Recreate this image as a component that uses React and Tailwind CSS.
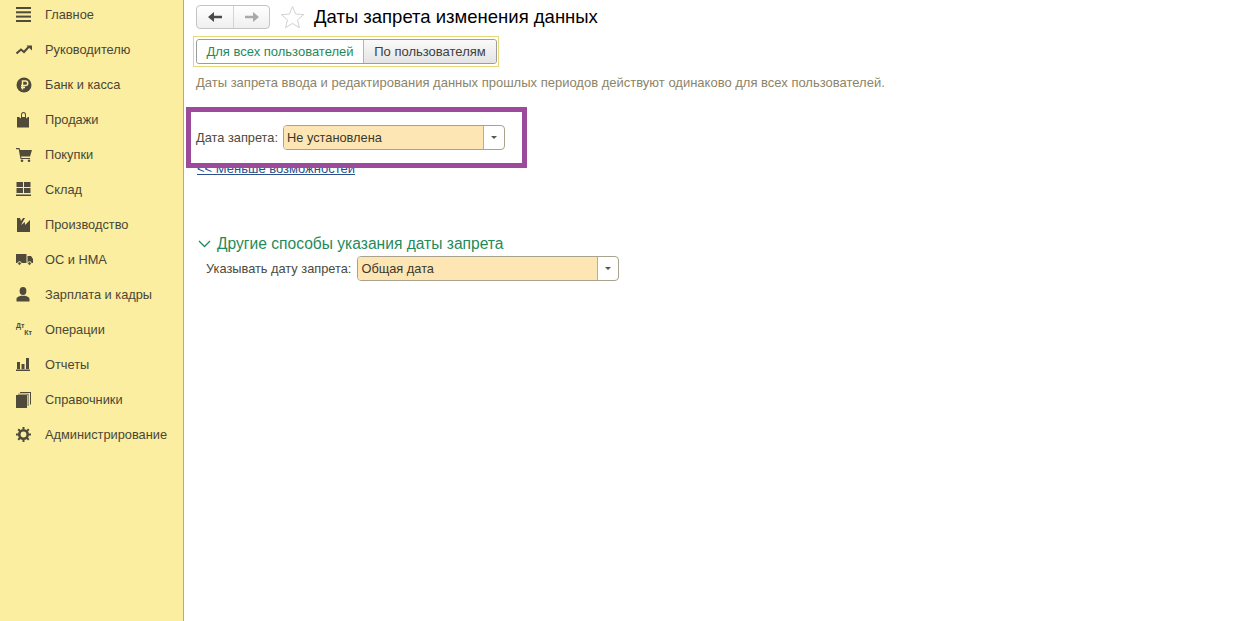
const Lines = () => (
  <svg width="16" height="15" viewBox="0 0 16 15" fill="#4f4a3a">
    <rect x="0" y="0" width="15" height="2" />
    <rect x="0" y="4.3" width="15" height="2" />
    <rect x="0" y="8.6" width="15" height="2" />
    <rect x="0" y="13" width="15" height="2" />
  </svg>
);
const Trend = () => (
  <svg width="16" height="14" viewBox="0 0 16 14" fill="none">
    <path d="M0.5 10.5 L5 6.5 L8 9 L13 3.5" stroke="#4f4a3a" strokeWidth="2" />
    <path d="M10.5 2.5 H16 V7.5 Z" fill="#4f4a3a" />
  </svg>
);
const Ruble = () => (
  <svg width="16" height="16" viewBox="0 0 16 16">
    <circle cx="8" cy="8" r="7.5" fill="#4f4a3a" />
    <path d="M6.5 12.5 V4 H9.5 A2.2 2.2 0 0 1 9.5 8.5 H5 M5 10.5 H9" stroke="#fbeea0" strokeWidth="1.5" fill="none" />
  </svg>
);
const Bag = () => (
  <svg width="16" height="16" viewBox="0 0 16 16">
    <path d="M1 5 H3 L5 6.5 V3 A2.5 3 0 0 1 10 3 V6.5 L12 5 H13 V15.5 H1 Z M6 5 H9 V3 A1.5 2 0 0 0 6 3 Z" fill="#4f4a3a" fillRule="evenodd" />
  </svg>
);
const Cart = () => (
  <svg width="17" height="14" viewBox="0 0 17 14" fill="#4f4a3a">
    <path d="M0 0 H3.5 L4 2 H16 L14 8.5 H5 L5.5 10 H14 V11 H4.5 L2.7 1.2 H0 Z" />
    <circle cx="6" cy="12.7" r="1.3" />
    <circle cx="13" cy="12.7" r="1.3" />
  </svg>
);
const Stock = () => (
  <svg width="16" height="15" viewBox="0 0 16 15" fill="#4f4a3a">
    <rect x="0.5" y="0" width="6.5" height="5" />
    <rect x="8" y="0" width="6.5" height="5" />
    <rect x="0.5" y="6" width="6.5" height="5" />
    <rect x="8" y="6" width="6.5" height="5" />
    <rect x="0" y="12.5" width="15" height="1.5" />
  </svg>
);
const Factory = () => (
  <svg width="16" height="15" viewBox="0 0 16 15" fill="#4f4a3a">
    <path d="M1 15 V1 H4 L5 4 L7 1 H9 L5 8 L9 5 V8 L14 3 V15 Z" />
  </svg>
);
const Truck = () => (
  <svg width="17" height="13" viewBox="0 0 17 13" fill="#4f4a3a">
    <path d="M0 1 H10.5 V10 H0 Z" />
    <path d="M11.5 3 H15 L17 6 V10 H11.5 Z" />
    <circle cx="3.5" cy="10.5" r="1.8" stroke="#fbeea0" />
    <circle cx="13.5" cy="10.5" r="1.8" stroke="#fbeea0" />
  </svg>
);
const Person = () => (
  <svg width="14" height="15" viewBox="0 0 14 15" fill="#4f4a3a">
    <ellipse cx="7" cy="4" rx="3.4" ry="4" />
    <path d="M0.5 14.5 V12 C0.5 10 3 9.5 5 8.7 H9 C11 9.5 13.5 10 13.5 12 V14.5 Z" />
  </svg>
);
const Chart = () => (
  <svg width="15" height="13" viewBox="0 0 15 13" fill="#4f4a3a">
    <rect x="1" y="4" width="3" height="7" />
    <rect x="5.5" y="6" width="3" height="5" />
    <rect x="10" y="0" width="3" height="11" />
    <rect x="0" y="11.5" width="14" height="1.5" />
  </svg>
);
const Books = () => (
  <svg width="15" height="16" viewBox="0 0 15 16" fill="#4f4a3a">
    <rect x="0" y="3" width="11" height="13" />
    <path d="M2 1.8 H12.5 V14 H11.7 V2.6 H2 Z" />
    <path d="M4 0 H15 V12.5 H14 V1 H4 Z" />
  </svg>
);
const Gear = () => (
  <svg width="15" height="15" viewBox="0 0 15 15">
    <circle cx="7.5" cy="7.5" r="4.2" fill="none" stroke="#4f4a3a" strokeWidth="2.6" />
    <path d="M7.5 0 V15 M0 7.5 H15 M2.2 2.2 L12.8 12.8 M12.8 2.2 L2.2 12.8" stroke="#4f4a3a" strokeWidth="2" strokeDasharray="2.6 9.8 2.6" />
  </svg>
);
const DtKt = () => (
  <div className="relative h-[15px] w-[16px] text-[7px] font-bold leading-[8px] text-[#4f4a3a]">
    <span className="absolute left-0 top-0">Дт</span>
    <span className="absolute right-0 bottom-0">Кт</span>
  </div>
);

const menu = [
  { icon: Lines, label: "Главное" },
  { icon: Trend, label: "Руководителю" },
  { icon: Ruble, label: "Банк и касса" },
  { icon: Bag, label: "Продажи" },
  { icon: Cart, label: "Покупки" },
  { icon: Stock, label: "Склад" },
  { icon: Factory, label: "Производство" },
  { icon: Truck, label: "ОС и НМА" },
  { icon: Person, label: "Зарплата и кадры" },
  { icon: DtKt, label: "Операции" },
  { icon: Chart, label: "Отчеты" },
  { icon: Books, label: "Справочники" },
  { icon: Gear, label: "Администрирование" },
];

function Select({ value, width }) {
  return (
    <div className={`flex h-[25px] rounded-[4px] border border-[#a9a28c] bg-white ${width}`}>
      <div className="flex flex-1 items-center rounded-l-[3px] border-r border-[#b5ae98] bg-[#fee6b4] pl-[3px] text-[12.8px] text-[#3a3a2c]">
        {value}
      </div>
      <div className="flex w-[20px] items-center justify-center">
        <div className="h-0 w-0 border-x-[3px] border-t-[3px] border-x-transparent border-t-[#555]" />
      </div>
    </div>
  );
}

export default function App() {
  return (
    <div className="flex h-[621px] w-[1255px] overflow-hidden bg-white font-['Liberation_Sans',Arial,sans-serif]">
      {/* Sidebar */}
      <aside className="h-full w-[184px] shrink-0 border-r border-[#b9ad6c] bg-[#fbeea0]">
        <div className="-mt-[3px]">
          {menu.map((item) => {
            const Icon = item.icon;
            return (
              <div key={item.label} className="flex h-[35px] items-center text-[12.8px] text-[#4a4636]">
                <div className="flex w-[45px] shrink-0 items-center pl-[16px]">
                  <Icon />
                </div>
                <span>{item.label}</span>
              </div>
            );
          })}
        </div>
      </aside>

      {/* Main */}
      <main className="relative flex-1 pl-[9px]">
        <div className="flex h-[36px] items-center pl-[3px] pb-[2px]">
          <div className="flex h-[24px] w-[74px] rounded-[4px] border border-[#c4c4c4] bg-gradient-to-b from-white to-[#efefef]">
            <div className="flex w-[37px] items-center justify-center border-r border-[#d4d4d4]">
              <svg width="14" height="10" viewBox="0 0 14 10" fill="#4a4a4a">
                <path d="M0 5 L6 0 V3.7 H14 V6.3 H6 V10 Z" />
              </svg>
            </div>
            <div className="flex flex-1 items-center justify-center">
              <svg width="14" height="10" viewBox="0 0 14 10" fill="#a9a9a9">
                <path d="M14 5 L8 0 V3.7 H0 V6.3 H8 V10 Z" />
              </svg>
            </div>
          </div>
          <svg className="ml-[10px]" width="25" height="24" viewBox="0 0 25 24" fill="none">
            <path d="M12.5 1.5 L15.6 9 L23.7 9.6 L17.5 14.8 L19.4 22.7 L12.5 18.4 L5.6 22.7 L7.5 14.8 L1.3 9.6 L9.4 9 Z" stroke="#d2d2d2" />
          </svg>
          <h1 className="ml-[9px] text-[18.5px] leading-none text-black">Даты запрета изменения данных</h1>
        </div>

        <div className="flex h-[31px] w-[306px] items-center border border-[#e6d97c] px-[2px]">
          <div className="flex h-[25px] rounded-[3px] border border-[#9d9d9d]">
            <div className="flex w-[166px] items-center justify-center rounded-l-[3px] bg-white text-[13px] text-[#1f8a5b]">
              Для всех пользователей
            </div>
            <div className="flex w-[133px] items-center justify-center rounded-r-[3px] border-l border-[#b5b5b5] bg-gradient-to-b from-[#fafafa] to-[#e4e4e4] text-[13px] text-[#404040]">
              По пользователям
            </div>
          </div>
        </div>

        <p className="mt-[8px] pl-[3px] text-[13px] leading-[16px] text-[#8c8468]">
          Даты запрета ввода и редактирования данных прошлых периодов действуют одинаково для всех пользователей.
        </p>

        <div className="mt-[34px] flex items-center gap-[5px] pl-[3px]">
          <span className="text-[12.8px] text-[#4a4a40]">Дата запрета:</span>
          <Select value="Не установлена" width="w-[222px]" />
        </div>

        <a className="mt-[12px] block pl-[4px] text-[13px] leading-[14px] text-[#2b4f8c] underline">&lt;&lt; Меньше возможностей</a>

        <div className="mt-[59px] flex items-center pl-[5px] text-[15.6px] leading-[18px] text-[#1f8a5b]">
          <svg width="14" height="10" viewBox="0 0 14 10" fill="none">
            <path d="M1 2 L6.5 7.5 L12 2" stroke="#1f8a5b" strokeWidth="1.3" />
          </svg>
          <span className="ml-[5px]">Другие способы указания даты запрета</span>
        </div>

        <div className="mt-[3px] flex items-center gap-[6px] pl-[13px]">
          <span className="text-[12.8px] text-[#4a4a40]">Указывать дату запрета:</span>
          <Select value="Общая дата" width="w-[262px]" />
        </div>

        {/* Purple highlight drawn over the screenshot */}
        <div className="absolute left-[2px] top-[107px] h-[61px] w-[341px] border-[5px] border-[#9c4a9c]" />
      </main>
    </div>
  );
}
